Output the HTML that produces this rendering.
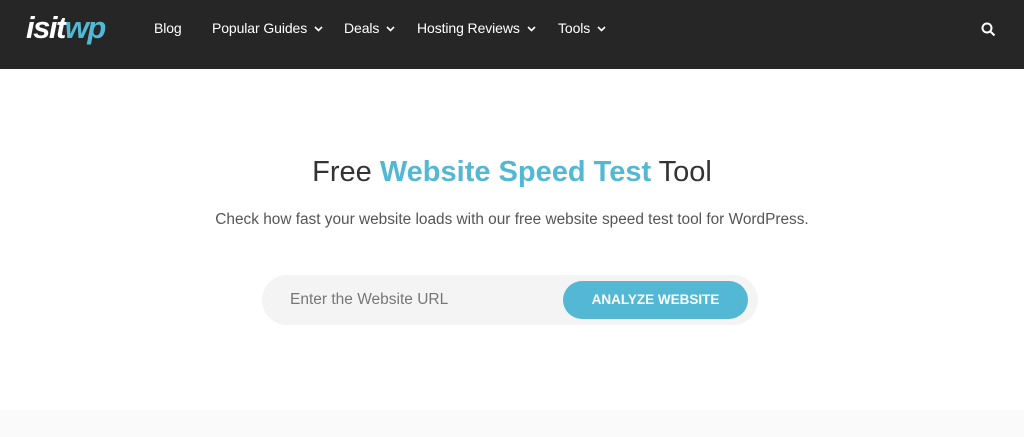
<!DOCTYPE html>
<html><head><style>
body{margin:0;width:1024px;height:437px;overflow:hidden;background:#fff;font-family:"Liberation Sans",sans-serif;position:relative}
.hd{position:absolute;left:0;top:0;width:1024px;height:69px;background:#262626}
.logo{position:absolute;left:26px;top:10px;font-size:31px;font-weight:bold;font-style:italic;letter-spacing:-1.5px;color:#fff}
.logo span{color:#52b8d3}
.nav{position:absolute;top:20px;font-size:14px;color:#fff;letter-spacing:-0.1px}
.nav svg{vertical-align:middle;margin-left:7px}
h1{position:absolute;left:0;width:1024px;top:156px;margin:0;text-align:center;font-weight:normal;font-size:29px;color:#333}
h1 b{color:#52b8d3}
.sub{position:absolute;left:0;width:1024px;top:211px;text-align:center;font-size:15.4px;color:#555}
.form{position:absolute;left:262px;top:275px;width:496px;height:50px;background:#f4f4f4;border-radius:25px}
.ph{position:absolute;left:28px;top:16px;font-size:15.5px;color:#777}
.btn{position:absolute;left:301px;top:6px;width:185px;height:38px;border-radius:19px;background:#52b8d3;color:#fff;font-weight:bold;font-size:13.5px;text-align:center;line-height:38px}
.ft{position:absolute;left:0;top:410px;width:1024px;height:27px;background:#fafafa}
</style></head><body>
<div class="hd">
<div class="logo">isit<span>wp</span></div>
<div class="nav" style="left:154px">Blog</div>
<div class="nav" style="left:212px">Popular Guides<svg width="9" height="6"><path d="M1 1l3.5 3.5L8 1" stroke="#fff" stroke-width="1.6" fill="none"/></svg></div>
<div class="nav" style="left:344px">Deals<svg width="9" height="6"><path d="M1 1l3.5 3.5L8 1" stroke="#fff" stroke-width="1.6" fill="none"/></svg></div>
<div class="nav" style="left:417px">Hosting Reviews<svg width="9" height="6"><path d="M1 1l3.5 3.5L8 1" stroke="#fff" stroke-width="1.6" fill="none"/></svg></div>
<div class="nav" style="left:558px">Tools<svg width="9" height="6"><path d="M1 1l3.5 3.5L8 1" stroke="#fff" stroke-width="1.6" fill="none"/></svg></div>
<svg style="position:absolute;left:981px;top:22px" width="15" height="15"><circle cx="6" cy="6" r="4.5" stroke="#fff" stroke-width="2" fill="none"/><path d="M9.5 9.5L13.5 13.5" stroke="#fff" stroke-width="2"/></svg>
</div>
<h1>Free <b>Website Speed Test</b> Tool</h1>
<div class="sub">Check how fast your website loads with our free website speed test tool for WordPress.</div>
<div class="form"><div class="ph">Enter the Website URL</div><div class="btn">ANALYZE WEBSITE</div></div>
<div class="ft"></div>
</body></html>
